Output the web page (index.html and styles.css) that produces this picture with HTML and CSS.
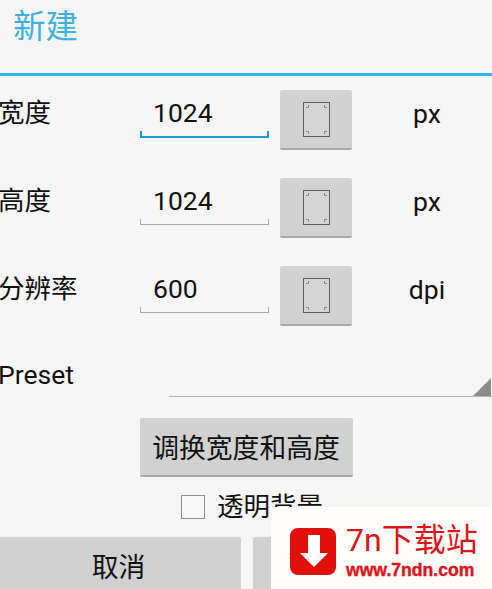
FILE: index.html
```html
<!DOCTYPE html>
<html lang="zh-CN">
<head>
    <meta charset="UTF-8">
    <meta name="viewport" content="width=device-width, initial-scale=1.0">
    <title>新建</title>
    <link rel="stylesheet" href="styles.css">
</head>
<body>
    <div class="dialog">
        <h1 class="title">新建</h1>
        <div class="divider"></div>

        <div class="row">
            <div class="label">宽度</div>
            <div class="field">
                <div class="value">1024</div>
                <div class="field_line active"></div>
            </div>
            <button class="btn_size">
                <svg class="icon_page" width="27" height="35" viewBox="0 0 27 35"><rect x="0.5" y="0.5" width="26" height="34" fill="#d6d6d6" stroke="#5f5f5f"/><path d="M5.500 3v2.500H3M21.500 3v2.500H24M3 29.500h2.500V32M24 29.500h-2.500V32" fill="none" stroke="#8a8a8a"/></svg>
            </button>
            <div class="unit">px</div>
        </div>

        <div class="row">
            <div class="label">高度</div>
            <div class="field">
                <div class="value">1024</div>
                <div class="field_line"></div>
            </div>
            <button class="btn_size">
                <svg class="icon_page" width="27" height="35" viewBox="0 0 27 35"><rect x="0.5" y="0.5" width="26" height="34" fill="#d6d6d6" stroke="#5f5f5f"/><path d="M5.500 3v2.500H3M21.500 3v2.500H24M3 29.500h2.500V32M24 29.500h-2.500V32" fill="none" stroke="#8a8a8a"/></svg>
            </button>
            <div class="unit">px</div>
        </div>

        <div class="row">
            <div class="label">分辨率</div>
            <div class="field">
                <div class="value">600</div>
                <div class="field_line"></div>
            </div>
            <button class="btn_size">
                <svg class="icon_page" width="27" height="35" viewBox="0 0 27 35"><rect x="0.5" y="0.5" width="26" height="34" fill="#d6d6d6" stroke="#5f5f5f"/><path d="M5.500 3v2.500H3M21.500 3v2.500H24M3 29.500h2.500V32M24 29.500h-2.500V32" fill="none" stroke="#8a8a8a"/></svg>
            </button>
            <div class="unit">dpi</div>
        </div>

        <div class="preset_row">
            <div class="label preset_label">Preset</div>
            <div class="spinner">
                <div class="spinner_arrow"></div>
            </div>
        </div>

        <div class="swap_row">
            <button class="btn btn_swap">调换宽度和高度</button>
        </div>

        <div class="check_row">
            <div class="checkbox"></div>
            <div class="check_text">透明背景</div>
        </div>

        <div class="bottom_row">
            <button class="btn btn_bottom">取消</button>
            <button class="btn btn_bottom"></button>
        </div>
    </div>

    <div class="watermark">
        <svg class="wm_logo" width="46" height="47" viewBox="0 0 46 47"><rect width="46" height="47" rx="8" fill="#e2100c"/><path d="M18 7h12v18h8L24 39 10 25h8z" fill="#fff"/></svg>
        <div class="wm_text">
            <div class="wm_name">7n下载站</div>
            <div class="wm_url">www.7ndn.com</div>
        </div>
    </div>
</body>
</html>
```

FILE: styles.css
```css
/*page*/
html, body{
    margin: 0;
    padding: 0;
    height: 100%;
    overflow: hidden;
}
body{
    position: relative;
    background-color: #f6f6f6;
    font-family: Roboto, "Noto Sans CJK SC", sans-serif;
    color: #111;
}
.dialog{
    width: 492px;
}

/*header*/
.title{
    height: 73px;
    margin: 0;
    padding-left: 13px;
    font-size: 32.5px;
    font-weight: normal;
    line-height: 54px;
    color: #3fb2e0;
}
.divider{
    height: 3px;
    margin-bottom: 14px;
    background-color: #33b4dc;
}

/*rows*/
.row{
    display: flex;
    height: 60px;
    margin-bottom: 28px;
}
.label{
    width: 142px;
    margin-left: -2px;
    font-size: 26.5px;
    line-height: 46px;
}
.field{
    width: 129px;
    margin-right: 11px;
}
.value{
    height: 41px;
    padding-left: 13px;
    font-size: 26.5px;
    line-height: 46px;
}
.field_line{
    height: 5px;
    border: 1px solid #aaa;
    border-top: none;
}
.field_line.active{
    height: 5px;
    border: 2px solid #1c9bc9;
    border-top: none;
}
.btn_size{
    display: flex;
    align-items: center;
    justify-content: center;
    width: 72px;
    height: 60px;
    padding: 0;
    border: none;
    border-bottom: 2px solid #a9a9a9;
    border-radius: 2px;
    background-color: #d1d1d1;
}
.unit{
    flex: 1;
    padding-left: 10px;
    font-size: 26.5px;
    line-height: 48px;
    text-align: center;
}

/*preset*/
.preset_row{
    display: flex;
    height: 45px;
    margin-top: -2px;
}
.preset_label{
    width: 171px;
    flex-shrink: 0;
}
.spinner{
    display: flex;
    flex: 1;
    align-items: flex-end;
    justify-content: flex-end;
    padding-right: 1px;
    border-bottom: 1px solid #b5b5b5;
}
.spinner_arrow{
    width: 18px;
    height: 18px;
    background-color: #8c8c8c;
    clip-path: polygon(100% 0, 100% 100%, 0 100%);
}

/*buttons*/
.btn{
    padding: 0;
    border: none;
    border-bottom: 2px solid #a9a9a9;
    border-radius: 2px;
    background-color: #d1d1d1;
    font-family: Roboto, "Noto Sans CJK SC", sans-serif;
    font-size: 26.8px;
    color: #111;
}
.swap_row{
    display: flex;
    justify-content: center;
    margin-top: 21px;
}
.btn_swap{
    width: 213px;
    height: 59px;
}
.check_row{
    display: flex;
    align-items: center;
    gap: 12px;
    height: 24px;
    margin-top: 18px;
    padding-left: 181px;
}
.checkbox{
    box-sizing: border-box;
    width: 24px;
    height: 24px;
    border: 1px solid #8f8f8f;
    background-color: #f9f9f9;
}
.check_text{
    font-size: 26.5px;
    line-height: 24px;
}
.bottom_row{
    display: flex;
    gap: 12px;
    margin-top: 18px;
    margin-left: -4px;
}
.btn_bottom{
    flex-shrink: 0;
    width: 245px;
    height: 60px;
    padding-bottom: 3px;
    border-bottom: none;
}

/*watermark*/
.watermark{
    position: absolute;
    right: 0;
    bottom: 0;
    display: flex;
    box-sizing: border-box;
    width: 221px;
    height: 82px;
    padding: 21px 0 0 19px;
    background-color: #fffefb;
}
.wm_logo{
    flex-shrink: 0;
    margin-right: 10px;
}
.wm_text{
    margin-top: -6px;
    color: #e0141a;
}
.wm_name{
    font-size: 32px;
    line-height: 36px;
    white-space: nowrap;
}
.wm_url{
    margin-top: 2px;
    font-family: "Liberation Sans", sans-serif;
    font-size: 17.6px;
    font-weight: bold;
    line-height: 20px;
    white-space: nowrap;
    -webkit-text-stroke: 0.4px #e0141a;
}
```
